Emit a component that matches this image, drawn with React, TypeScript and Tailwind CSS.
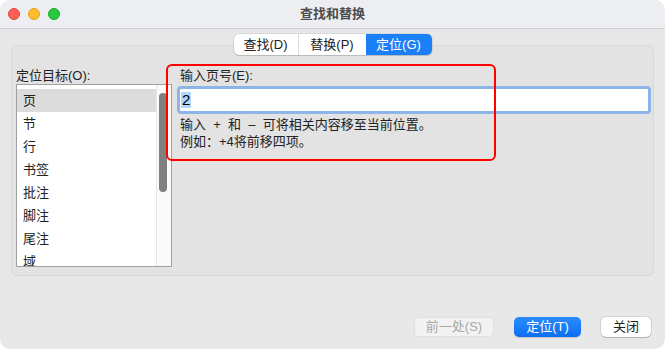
import React from 'react'

const FONT = '"Liberation Sans", "Noto Sans CJK SC", sans-serif'

const TARGETS = ['页', '节', '行', '书签', '批注', '脚注', '尾注', '域']

const TrafficLights = () => (
  <div className="flex items-center gap-[8px] pl-[8px]">
    <span className="block w-[12px] h-[12px] rounded-full bg-[#fe5f57] border border-[#e2463f]" />
    <span className="block w-[12px] h-[12px] rounded-full bg-[#febc2e] border border-[#e1a116]" />
    <span className="block w-[12px] h-[12px] rounded-full bg-[#28c840] border border-[#1aab29]" />
  </div>
)

const Tabs = () => (
  <div className="flex justify-center relative z-10">
    <div className="flex h-[21px] rounded-[5px] bg-white shadow-[0_0_0_0.5px_rgba(0,0,0,0.15),0_1px_1px_rgba(0,0,0,0.12)] text-[13px] text-[#222] overflow-hidden">
      <div className="w-[65px] flex items-center justify-center border-r border-[#dcdcdc]">查找(D)</div>
      <div className="w-[67px] flex items-center justify-center">替换(P)</div>
      <div className="w-[66px] flex items-center justify-center bg-[#1b7ffa] text-white">定位(G)</div>
    </div>
  </div>
)

const TargetList = () => (
  <div className="flex flex-col w-[156px]">
    <div className="h-[14px] text-[13px] leading-[14px] text-[#222]">定位目标(O):</div>
    <div className="mt-[1px] h-[183px] flex border border-[#a0a0a0] bg-white overflow-hidden">
      <div className="flex-1 pt-[4px] flex flex-col">
        {TARGETS.map((t, i) => (
          <div
            key={t}
            className={`h-[23px] shrink-0 flex items-center pl-[6px] text-[13px] text-[#222] ${i === 0 ? 'bg-[#dcdcdc]' : ''}`}
          >
            {t}
          </div>
        ))}
      </div>
      <div className="w-[15px] bg-[#fafafa] border-l border-[#e6e6e6] pt-[8px] pl-[2px]">
        <div className="w-[8px] h-[99px] rounded-full bg-[#808080]" />
      </div>
    </div>
  </div>
)

const PageInput = () => (
  <div className="flex-1 flex flex-col pl-[3px]">
    <div className="h-[14px] text-[13px] leading-[14px] text-[#222] pl-[3px]">输入页号(E):</div>
    <div className="mt-[3px] h-[28px] rounded-[4px] border-[3px] border-[#8db5ea] bg-white flex items-center pl-[1px]">
      <span className="bg-[#b4d5fe] text-[15px] leading-[16px] text-black px-[1px]">2</span>
    </div>
    <div className="pl-[3px] mt-[2px] text-[13px] leading-[17px] text-[#222]">
      <div className="whitespace-pre">输入  +  和  –  可将相关内容移至当前位置。</div>
      <div>例如：+4将前移四项。</div>
    </div>
  </div>
)

export default function App() {
  return (
    <div className="w-[665px] h-[349px] bg-white" style={{ fontFamily: FONT }}>
      <div className="relative w-full h-full rounded-[10px] overflow-hidden bg-[#e8e8e8] flex flex-col">
        <div className="h-[29px] shrink-0 bg-[#eceef1] border-b border-[#d0d0d0] relative flex items-center">
          <TrafficLights />
          <div className="absolute inset-0 flex items-center justify-center text-[13px] font-bold text-[#4b4b4b]">
            查找和替换
          </div>
        </div>

        <div className="px-[11px] pt-[5px] flex flex-col">
          <Tabs />
          <div className="-mt-[10px] h-[231px] rounded-[5px] bg-[#e3e3e3] border border-[#d8d8d8] flex pl-[4px] pr-[2px] pt-[23px] gap-[2px]">
            <TargetList />
            <PageInput />
          </div>
        </div>

        <div className="flex justify-end items-center pr-[14px] mt-[41px] text-[13px]">
          <div className="w-[80px] h-[20px] rounded-[5px] bg-[#f2f2f2] border border-[#e0e0e0] text-[#a8a8a8] flex items-center justify-center">
            前一处(S)
          </div>
          <div className="ml-[20px] w-[67px] h-[20px] rounded-[5px] bg-gradient-to-b from-[#2a8cfc] to-[#0a6ff3] text-white flex items-center justify-center shadow-[0_1px_1px_rgba(0,0,0,0.15)]">
            定位(T)
          </div>
          <div className="ml-[20px] w-[50px] h-[20px] rounded-[5px] bg-white text-[#222] flex items-center justify-center shadow-[0_0_0_0.5px_rgba(0,0,0,0.18),0_1px_1px_rgba(0,0,0,0.15)]">
            关闭
          </div>
        </div>

        {/* red annotation box */}
        <div className="absolute left-[166px] top-[64px] w-[330px] h-[97px] rounded-[6px] border-2 border-[#ff0000] pointer-events-none" />
      </div>
    </div>
  )
}
